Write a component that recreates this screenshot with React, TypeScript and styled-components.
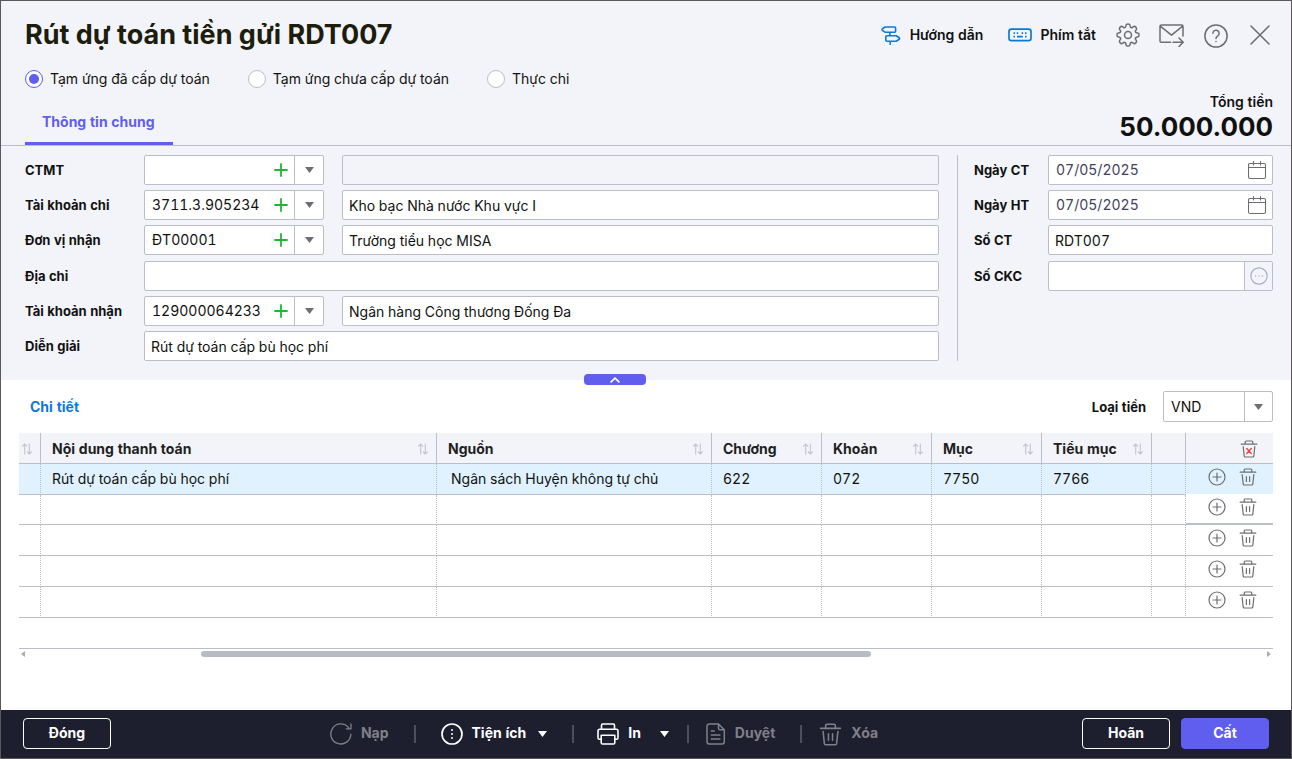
import React from "react";
import styled, { createGlobalStyle, css } from "styled-components";

const line = "#bbbdc9";
const surface = "#f3f4f9";
const accent = "#5f5eef";
const blue = "#0b7ad6";
const iconGray = "#6d6e73";

const GlobalStyle = createGlobalStyle`
  * { box-sizing: border-box; }
  body {
    margin: 0;
    background: #fff;
    color: #111;
    font-family: Inter, "Liberation Sans", sans-serif;
    font-size: 14px;
    line-height: 20px;
    font-variant-numeric: tabular-nums;
  }
  button, input, select { font: inherit; font-variant-numeric: inherit; color: inherit; margin: 0; }
  button { border: 0; padding: 0; background: none; cursor: pointer; }
  svg { display: block; flex: none; }
`;

const Page = styled.div`
  min-height: 100vh;
  display: flex;
  flex-direction: column;
  border: 1px solid #5c585a;
`;

/* Header */

const Top = styled.header`
  background: ${surface};
  border-bottom: 1px solid ${line};
  padding: 14px 18px 0 24px;
`;

const TitleRow = styled.div`
  display: flex;
  align-items: center;
  justify-content: space-between;
  height: 40px;
`;

const Title = styled.h1`
  margin: 0;
  font-size: 27px;
  line-height: 40px;
  font-weight: 700;
  font-variant-numeric: normal;
  color: #1c1d0c;
`;

const Tools = styled.div`
  display: flex;
  align-items: center;
  gap: 19px;
  padding-right: 1px;
`;

const ToolLink = styled.a`
  display: flex;
  align-items: center;
  gap: 9px;
  margin-right: 6px;
  font-weight: 600;
  color: #111;
  text-decoration: none;
`;

const ToolLast = styled(ToolLink)`
  gap: 8px;
  margin-right: 0;
`;

const IconButton = styled.button`
  display: flex;
  align-items: center;
  justify-content: center;
  width: 25px;
  height: 26px;
  color: ${iconGray};
`;

const Radios = styled.div`
  display: flex;
  align-items: center;
  gap: 38px;
  height: 20px;
  margin-top: 14px;
`;

const RadioLabel = styled.label`
  display: flex;
  align-items: center;
  gap: 7px;
`;

const Radio = styled.input`
  appearance: none;
  width: 18px;
  height: 18px;
  border: 1px solid ${line};
  border-radius: 50%;
  background: #fff;
  display: grid;
  place-items: center;
  &:checked { border-color: ${accent}; }
  &:checked::after {
    content: "";
    width: 10px;
    height: 10px;
    border-radius: 50%;
    background: ${accent};
  }
`;

const TabRow = styled.div`
  display: flex;
  align-items: flex-end;
  justify-content: space-between;
  height: 56px;
`;

const Tab = styled.button`
  height: 44px;
  padding: 0 18px 0 17px;
  border-bottom: 3px solid ${accent};
  color: ${accent};
  font-weight: 700;
`;

const Total = styled.div`
  text-align: right;
`;

const TotalLabel = styled.div`
  font-weight: 600;
`;

const TotalValue = styled.div`
  font-size: 26px;
  line-height: 30px;
  font-weight: 700;
  font-variant-numeric: normal;
  padding-bottom: 3px;
`;

/* Form */

const FormArea = styled.section`
  position: relative;
  display: flex;
  background: ${surface};
  padding: 9px 18px 19px 24px;
`;

const MainFields = styled.div`
  flex: 1;
  min-width: 0;
  display: grid;
  grid-template-rows: repeat(3, 30px) 31px 30px 30px;
  gap: 5px;
  padding-right: 18px;
`;

const SideFields = styled.div`
  width: 316px;
  display: grid;
  grid-template-rows: repeat(3, 30px) 31px;
  align-content: start;
  gap: 5px;
  padding-left: 16px;
  border-left: 1px solid ${line};
`;

const Field = styled.div<{ $label: number }>`
  display: grid;
  grid-template-columns: ${(p) => p.$label}px minmax(0, 1fr);
  align-items: center;
`;

const Label = styled.label`
  font-size: 13px;
  font-weight: 700;
`;

const Pair = styled.div`
  display: flex;
  gap: 18px;
`;

const boxed = css`
  height: 30px;
  border: 1px solid ${line};
  border-radius: 2px;
  background: #fff;
`;

const TextInput = styled.input<{ $muted?: boolean }>`
  ${boxed}
  width: 100%;
  min-width: 0;
  padding: 0 6px;
  outline: none;
  ${(p) => p.$muted && css`background: ${surface};`}
`;

const Group = styled.div<{ $fixed?: boolean }>`
  ${boxed}
  display: flex;
  align-items: stretch;
  overflow: hidden;
  ${(p) => p.$fixed && css`flex: 0 0 180px;`}
`;

const BareInput = styled.input<{ $date?: boolean }>`
  flex: 1;
  min-width: 0;
  margin: 0 6px 0 7px;
  border: 0;
  padding: 0;
  background: none;
  outline: none;
  ${(p) => p.$date && css`color: #40425e;`}
`;

const GroupButton = styled.button<{ $width: number; $divided?: boolean; $muted?: boolean }>`
  display: flex;
  align-items: center;
  justify-content: center;
  width: ${(p) => p.$width}px;
  color: ${iconGray};
  ${(p) => p.$divided && css`border-left: 1px solid ${line};`}
  ${(p) => p.$muted && css`background: ${surface}; color: #a9adc6;`}
`;

const Collapse = styled.button`
  position: absolute;
  left: 583px;
  bottom: -5px;
  width: 62px;
  height: 11px;
  border-radius: 4px;
  background: ${accent};
  display: flex;
  align-items: center;
  justify-content: center;
`;

/* Detail */

const Detail = styled.main`
  flex: 1;
  padding: 11px 18px 0;
`;

const DetailBar = styled.div`
  display: flex;
  align-items: center;
  justify-content: space-between;
  padding: 0 0 11px 11px;
`;

const DetailTitle = styled.h2`
  margin: 0;
  font-size: 14px;
  font-weight: 700;
  color: ${blue};
`;

const Currency = styled.div`
  display: flex;
  align-items: center;
  gap: 17px;
`;

const SelectBox = styled.div`
  position: relative;
  width: 110px;
`;

const Select = styled.select`
  ${boxed}
  display: block;
  height: 31px;
  width: 100%;
  padding: 0 7px;
  appearance: none;
  outline: none;
`;

const SelectArrow = styled.span`
  position: absolute;
  top: 1px;
  right: 1px;
  bottom: 1px;
  width: 28px;
  border-left: 1px solid ${line};
  display: grid;
  place-items: center;
  color: ${iconGray};
  pointer-events: none;
`;

const Table = styled.table`
  width: 100%;
  table-layout: fixed;
  border-collapse: separate;
  border-spacing: 0;
`;

const Th = styled.th<{ $first?: boolean; $last?: boolean }>`
  height: 31px;
  padding: ${(p) => (p.$first ? "2px 8px 0 2px" : p.$last ? "2px 15px 0 0" : "2px 8px 0 11px")};
  background: ${surface};
  border-bottom: 1px solid ${line};
  border-right: ${(p) => (p.$last ? "0" : `1px solid ${line}`)};
  font-weight: 700;
  color: #1f1f1f;
`;

const HeadCell = styled.div<{ $end?: boolean }>`
  display: flex;
  align-items: center;
  justify-content: ${(p) => (p.$end ? "flex-end" : "space-between")};
  white-space: nowrap;
`;

const SortButton = styled.button`
  color: #c3c5cd;
`;

const ClearAllButton = styled.button`
  color: ${iconGray};
`;

const Row = styled.tr<{ $height: number; $selected?: boolean }>`
  height: ${(p) => p.$height}px;
  background: ${(p) => (p.$selected ? "#e0f1ff" : "#fff")};
`;

const Td = styled.td<{ $indent?: boolean }>`
  padding: 0 0 0 ${(p) => (p.$indent ? 14 : 11)}px;
  border-bottom: 1px solid ${line};
  border-right: 1px dotted ${line};
  white-space: nowrap;
  overflow: hidden;
`;

const ActionTd = styled.td<{ $edge: "none" | "thin" | "thick" }>`
  padding: 0 0 4px 22px;
  border-bottom: ${(p) =>
    p.$edge === "none" ? "1px solid #fff" : p.$edge === "thin" ? `1px solid ${line}` : `2px solid ${line}`};
`;

const Actions = styled.div`
  display: flex;
  align-items: center;
  gap: 13px;
  color: ${iconGray};
  button { color: inherit; }
`;

const TableEnd = styled.div`
  height: 31px;
  border-bottom: 1px solid ${line};
`;

const ScrollTrack = styled.div`
  display: flex;
  align-items: center;
  height: 10px;
  padding: 0 2px;
`;

const Gap = styled.span<{ $share: number }>`
  flex: ${(p) => p.$share};
`;

const Thumb = styled.span`
  flex: 670;
  height: 6px;
  border-radius: 3px;
  background: #b8bbc2;
`;

/* Footer */

const Footer = styled.footer`
  display: flex;
  align-items: center;
  height: 48px;
  padding: 0 22px;
  background: #1d1e2e;
  color: #fff;
`;

const FooterButton = styled.button<{ $primary?: boolean }>`
  width: 88px;
  height: 31px;
  margin-bottom: 2px;
  border: 1px solid ${(p) => (p.$primary ? accent : "#fff")};
  border-radius: 4px;
  background: ${(p) => (p.$primary ? accent : "transparent")};
  font-weight: 700;
`;

const Commands = styled.div`
  flex: 1;
  display: flex;
  align-items: center;
  justify-content: center;
  padding-left: 15px;
`;

const Command = styled.button`
  display: flex;
  align-items: center;
  gap: 9px;
  font-weight: 700;
  &:disabled { color: #7f8089; cursor: default; }
`;

const CommandText = styled.span`
  padding-bottom: 2px;
`;

const Caret = styled.button<{ $space: number }>`
  margin-left: ${(p) => p.$space}px;
`;

const Separator = styled.span<{ $before: number; $after: number }>`
  width: 2px;
  height: 18px;
  margin: 0 ${(p) => p.$after}px 0 ${(p) => p.$before}px;
  background: #4e4f5b;
`;

const Confirm = styled.div`
  display: flex;
  gap: 11px;
`;

/* Icons */

const stroke = { fill: "none", stroke: "currentColor", strokeWidth: 1.3, strokeLinecap: "round", strokeLinejoin: "round" } as const;

const Signpost = () => (
  <svg width="20" height="20" viewBox="0 0 20 20" {...stroke} stroke={blue} strokeWidth={1.6}>
    <path d="M4 2h9.6c.6 0 1 .4 1 1v3.2c0 .6-.4 1-1 1H4L1.4 5.4a1 1 0 0 1 0-1.6zM8.8 7.2v3.6M5.8 10.8h9.4l3 1.9a1 1 0 0 1 0 1.6l-3 1.9H5.8a1 1 0 0 1-1-1v-3.4a1 1 0 0 1 1-1zM9.2 16.2v3" />
  </svg>
);

const Keyboard = () => (
  <svg width="24" height="14" viewBox="0 0 24 14" {...stroke} stroke={blue} strokeWidth={1.7}>
    <rect x="1" y="1.2" width="22" height="11.4" rx="2.4" />
    <path d="M5.5 5.2h1.5M8.7 5.2h1.5M13.6 5.2h1.5M17 5.2h1.5M5.5 8.6h1.5M9 8.6h5.8M17 8.6h1.5" strokeWidth="1.7" strokeLinecap="butt" />
  </svg>
);

const Gear = () => (
  <svg width="24" height="24" viewBox="1 0.2 22 22" {...stroke} strokeWidth={1.4}>
    <circle cx="12" cy="11.2" r="3.2" />
    <path d="M10.2 2.2c.3-1.5 3.3-1.5 3.6 0l.3 1.3c.2.8 1.1 1.2 1.9.8l1.1-.8c1.3-.8 3.4 1.3 2.6 2.6l-.8 1.1c-.4.8 0 1.7.8 1.9l1.3.3c1.5.3 1.5 3.3 0 3.6l-1.3.3c-.8.2-1.2 1.1-.8 1.9l.8 1.1c.8 1.3-1.3 3.4-2.6 2.6l-1.1-.8c-.8-.4-1.7 0-1.9.8l-.3 1.3c-.3 1.5-3.3 1.5-3.6 0l-.3-1.3c-.2-.8-1.1-1.2-1.9-.8l-1.1.8c-1.3.8-3.4-1.3-2.6-2.6l.8-1.1c.4-.8 0-1.7-.8-1.9l-1.3-.3c-1.5-.3-1.5-3.3 0-3.6l1.3-.3c.8-.2 1.2-1.1.8-1.9l-.8-1.1c-.8-1.3 1.3-3.4 2.6-2.6l1.1.8c.8.4 1.7 0 1.9-.8z" />
  </svg>
);

const Mail = () => (
  <svg width="25" height="24" viewBox="0 0 25 24" {...stroke} strokeWidth={1.5}>
    <path d="M11.5 19.3H2.3A1.3 1.3 0 0 1 1 18V3.3A1.3 1.3 0 0 1 2.3 2h20.4A1.3 1.3 0 0 1 24 3.3v9.8M1.3 3.2l11.2 9L23.7 3.2M14 19.3h10M20 15l4.2 4.3-4.2 4.2" />
  </svg>
);

const Help = () => (
  <svg width="24" height="26" viewBox="0 0 24 26" {...stroke} strokeWidth={1.5}>
    <circle cx="12" cy="14" r="11.1" />
    <path d="M8.9 11.3a3.1 3.1 0 1 1 4.9 2.5c-1.2.8-1.8 1.3-1.8 2.6M12 19.5v.1" />
  </svg>
);

const Close = () => (
  <svg width="20" height="20" viewBox="0 0 20 20" {...stroke} strokeWidth={1.6}>
    <path d="M1 1l18 18M19 1L1 19" />
  </svg>
);

const Plus = () => (
  <svg width="14" height="14" viewBox="0 0 14 14" stroke="#21b534" strokeWidth="1.8" strokeLinecap="round">
    <path d="M7 1v12M1 7h12" />
  </svg>
);

const Down = () => (
  <svg width="9" height="6" viewBox="0 0 9 6" fill="currentColor">
    <path d="M0 0h9L4.5 6z" />
  </svg>
);

const Calendar = () => (
  <svg width="19" height="19" viewBox="0 0 19 19" {...stroke} strokeWidth={1.1}>
    <rect x="0.5" y="2.5" width="17" height="15" rx="1.5" />
    <path d="M.5 6.500h17M5.500.5v3.500M12.500.5v3.500" />
  </svg>
);

const Dots = () => (
  <svg width="18" height="18" viewBox="0 0 18 18" {...stroke}>
    <circle cx="9" cy="9" r="8.2" strokeWidth="1.2" />
    <path d="M5.5 9h.1M9 9h.1M12.5 9h.1" />
  </svg>
);

const Sort = () => (
  <svg width="10" height="12" viewBox="0 0 10 12" {...stroke} strokeWidth={1.1}>
    <path d="M2.7 11V1M.6 3.2L2.7 1l2 2.2M7.3 1v10M5.2 8.8L7.3 11l2.1-2.2" />
  </svg>
);

const AddCircle = () => (
  <svg width="18" height="18" viewBox="0 0 18 18" {...stroke} strokeWidth={1.2}>
    <circle cx="9" cy="9" r="8" />
    <path d="M9 5v8M5 9h8" />
  </svg>
);

const Trash = ({ size = 18, clear }: { size?: number; clear?: boolean }) => (
  <svg width={size} height={size} viewBox="0 0 18 18" {...stroke} strokeWidth={1.2}>
    <path d="M1.2 4.2h15.6M5.2 4V2c0-.6.4-1 1-1h5.6c.6 0 1 .4 1 1v2M3.2 6.6l1 9.6c.1.5.4.8.9.8h7.8c.5 0 .8-.3.9-.8l1-9.6" />
    {clear ? (
      <path d="M6.7 8.5l4.6 5M11.3 8.5l-4.6 5" stroke="#f04545" strokeWidth="1.4" />
    ) : (
      <path d="M7.4 8.5v5M10.6 8.5v5" />
    )}
  </svg>
);

const Reload = () => (
  <svg width="22" height="22" viewBox="0 0 22 22" {...stroke}>
    <path d="M20.8 11.2A10 10 0 1 1 18.6 4.7M21 1v4.8h-4.8" />
  </svg>
);

const More = () => (
  <svg width="22" height="22" viewBox="0 0 22 22" {...stroke} strokeWidth={1.7}>
    <circle cx="11" cy="11" r="10" />
    <path d="M11 7v.1M11 11v.1M11 15v.1" strokeWidth="2" />
  </svg>
);

const Printer = () => (
  <svg width="22" height="22" viewBox="0 0 22 22" {...stroke} strokeWidth={1.6}>
    <path d="M4.5 6.2V2.2c0-.7.5-1.2 1.2-1.2h10.6c.7 0 1.2.5 1.2 1.2v4M4.2 16.2H2.4c-.8 0-1.4-.6-1.4-1.4V8c0-1 .8-1.8 1.8-1.8h16.4c1 0 1.8.8 1.8 1.8v6.8c0 .8-.6 1.4-1.4 1.4h-1.8M4.2 12.2h13.6v7.5c0 .7-.6 1.3-1.3 1.3h-11c-.7 0-1.3-.6-1.3-1.3z" />
  </svg>
);

const Doc = () => (
  <svg width="20" height="22" viewBox="0 0 20 22" {...stroke} strokeWidth={1.5}>
    <path d="M12.5 1H3.2A2.2 2.2 0 0 0 1 3.2v15.6A2.2 2.2 0 0 0 3.2 21h12.9a2.2 2.2 0 0 0 2.2-2.2V6.800zM12.5 1v4.4c0 .8.6 1.4 1.4 1.4h4.4M5.3 8h3M5.3 12h8.6M5.3 16h8.6" />
  </svg>
);

const ChevronUp = () => (
  <svg width="10" height="6" viewBox="0 0 10 6" fill="none" stroke="#fff" strokeWidth="1.6">
    <path d="M.6 5.4L5 1.2l4.4 4.2" />
  </svg>
);

const ScrollArrow = ({ left }: { left?: boolean }) => (
  <svg width="4" height="6" viewBox="0 0 4 6" fill="#a9acb3">
    <path d={left ? "M4 0v6L0 3z" : "M0 0v6l4-3z"} />
  </svg>
);

/* Composed parts */

const mainFields = [
  { id: "ctmt", label: "CTMT", code: "", name: "", muted: true },
  { id: "tkchi", label: "Tài khoản chi", code: "3711.3.905234", name: "Kho bạc Nhà nước Khu vực I" },
  { id: "dvnhan", label: "Đơn vị nhận", code: "ĐT00001", name: "Trường tiểu học MISA" },
  { id: "diachi", label: "Địa chỉ", name: "" },
  { id: "tknhan", label: "Tài khoản nhận", code: "129000064233", name: "Ngân hàng Công thương Đống Đa" },
  { id: "diengiai", label: "Diễn giải", name: "Rút dự toán cấp bù học phí" },
];

const columns = [
  { name: "Nội dung thanh toán", value: "Rút dự toán cấp bù học phí" },
  { name: "Nguồn", value: "Ngân sách Huyện không tự chủ", width: 275 },
  { name: "Chương", value: "622", width: 110 },
  { name: "Khoản", value: "072", width: 110 },
  { name: "Mục", value: "7750", width: 110 },
  { name: "Tiểu mục", value: "7766", width: 110 },
];

const rowHeights = [31, 30, 31, 31, 31];

const DateField = ({ id, label }: { id: string; label: string }) => (
  <Field $label={74}>
    <Label htmlFor={id}>{label}</Label>
    <Group>
      <BareInput id={id} $date defaultValue="07/05/2025" />
      <GroupButton $width={30} aria-label="Chọn ngày"><Calendar /></GroupButton>
    </Group>
  </Field>
);

export default function App() {
  return (
    <Page>
      <GlobalStyle />
      <Top>
        <TitleRow>
          <Title>Rút dự toán tiền gửi RDT007</Title>
          <Tools>
            <ToolLink href="#"><Signpost />Hướng dẫn</ToolLink>
            <ToolLast href="#"><Keyboard />Phím tắt</ToolLast>
            <IconButton aria-label="Thiết lập"><Gear /></IconButton>
            <IconButton aria-label="Gửi thư"><Mail /></IconButton>
            <IconButton aria-label="Trợ giúp"><Help /></IconButton>
            <IconButton aria-label="Đóng"><Close /></IconButton>
          </Tools>
        </TitleRow>
        <Radios>
          {["Tạm ứng đã cấp dự toán", "Tạm ứng chưa cấp dự toán", "Thực chi"].map((text, i) => (
            <RadioLabel key={text}>
              <Radio type="radio" name="kind" defaultChecked={i === 0} />
              {text}
            </RadioLabel>
          ))}
        </Radios>
        <TabRow>
          <Tab>Thông tin chung</Tab>
          <Total>
            <TotalLabel>Tổng tiền</TotalLabel>
            <TotalValue>50.000.000</TotalValue>
          </Total>
        </TabRow>
      </Top>

      <FormArea>
        <MainFields>
          {mainFields.map((f) => (
            <Field key={f.id} $label={119}>
              <Label htmlFor={f.id}>{f.label}</Label>
              {f.code === undefined ? (
                <TextInput id={f.id} defaultValue={f.name} />
              ) : (
                <Pair>
                  <Group $fixed>
                    <BareInput id={f.id} defaultValue={f.code} />
                    <GroupButton $width={26} aria-label="Thêm"><Plus /></GroupButton>
                    <GroupButton $width={29} $divided aria-label="Mở danh sách"><Down /></GroupButton>
                  </Group>
                  <TextInput aria-label={`${f.label} - tên`} defaultValue={f.name} $muted={f.muted} disabled={f.muted} />
                </Pair>
              )}
            </Field>
          ))}
        </MainFields>
        <SideFields>
          <DateField id="ngayct" label="Ngày CT" />
          <DateField id="ngayht" label="Ngày HT" />
          <Field $label={74}>
            <Label htmlFor="soct">Số CT</Label>
            <TextInput id="soct" defaultValue="RDT007" />
          </Field>
          <Field $label={74}>
            <Label htmlFor="sockc">Số CKC</Label>
            <Group>
              <BareInput id="sockc" />
              <GroupButton $width={28} $divided $muted aria-label="Chọn"><Dots /></GroupButton>
            </Group>
          </Field>
        </SideFields>
        <Collapse aria-label="Thu gọn"><ChevronUp /></Collapse>
      </FormArea>

      <Detail>
        <DetailBar>
          <DetailTitle>Chi tiết</DetailTitle>
          <Currency>
            <Label htmlFor="currency">Loại tiền</Label>
            <SelectBox>
              <Select id="currency" defaultValue="VND">
                <option>VND</option>
              </Select>
              <SelectArrow><Down /></SelectArrow>
            </SelectBox>
          </Currency>
        </DetailBar>
        <Table>
          <colgroup>
            <col style={{ width: 22 }} />
            {columns.map((c) => <col key={c.name} style={{ width: c.width }} />)}
            <col style={{ width: 34 }} />
            <col style={{ width: 87 }} />
          </colgroup>
          <thead>
            <tr>
              <Th $first><HeadCell $end><SortButton aria-label="Sắp xếp"><Sort /></SortButton></HeadCell></Th>
              {columns.map((c) => (
                <Th key={c.name}>
                  <HeadCell>{c.name}<SortButton aria-label="Sắp xếp"><Sort /></SortButton></HeadCell>
                </Th>
              ))}
              <Th />
              <Th $last>
                <HeadCell $end><ClearAllButton aria-label="Xóa tất cả"><Trash clear /></ClearAllButton></HeadCell>
              </Th>
            </tr>
          </thead>
          <tbody>
            {rowHeights.map((h, r) => (
              <Row key={r} $height={h} $selected={r === 0}>
                <Td />
                {columns.map((c, i) => <Td key={c.name} $indent={i === 1}>{r === 0 ? c.value : ""}</Td>)}
                <Td />
                <ActionTd $edge={r === 0 ? "none" : r === 1 ? "thick" : "thin"}>
                  <Actions>
                    <button aria-label="Thêm dòng"><AddCircle /></button>
                    <button aria-label="Xóa dòng"><Trash /></button>
                  </Actions>
                </ActionTd>
              </Row>
            ))}
          </tbody>
        </Table>
        <TableEnd />
        <ScrollTrack>
          <ScrollArrow left />
          <Gap $share={176} />
          <Thumb />
          <Gap $share={396} />
          <ScrollArrow />
        </ScrollTrack>
      </Detail>

      <Footer>
        <FooterButton>Đóng</FooterButton>
        <Commands>
          <Command disabled><Reload /><CommandText>Nạp</CommandText></Command>
          <Separator $before={25} $after={25} />
          <Command><More /><CommandText>Tiện ích</CommandText></Command>
          <Caret $space={12} aria-label="Mở tiện ích"><Down /></Caret>
          <Separator $before={25} $after={23} />
          <Command><Printer /><CommandText>In</CommandText></Command>
          <Caret $space={19} aria-label="Mở in"><Down /></Caret>
          <Separator $before={18} $after={17} />
          <Command disabled><Doc /><CommandText>Duyệt</CommandText></Command>
          <Separator $before={25} $after={17} />
          <Command disabled><Trash size={23} /><CommandText>Xóa</CommandText></Command>
        </Commands>
        <Confirm>
          <FooterButton>Hoãn</FooterButton>
          <FooterButton $primary>Cất</FooterButton>
        </Confirm>
      </Footer>
    </Page>
  );
}
